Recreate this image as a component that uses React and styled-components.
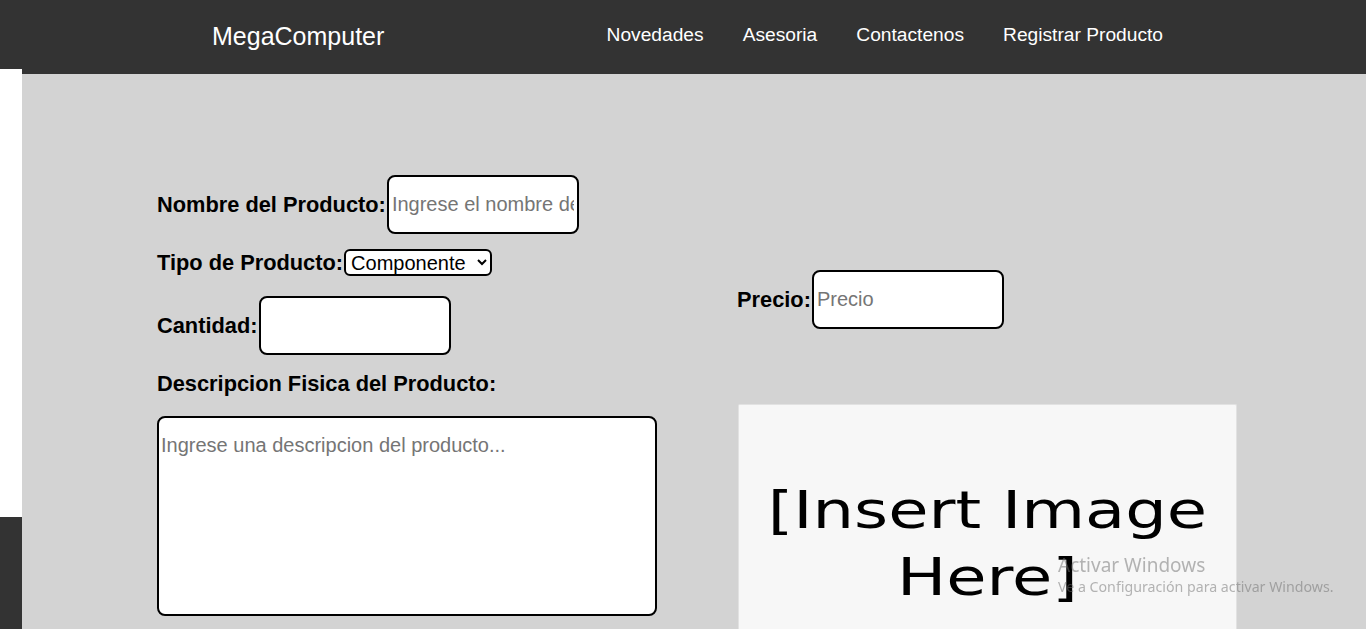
import React from 'react'
import styled, { createGlobalStyle } from 'styled-components'

const GlobalStyle = createGlobalStyle`
  html, body {
    margin: 0;
    padding: 0;
    background: #333333;
    font-family: "Liberation Sans", Arial, sans-serif;
  }
  * {
    box-sizing: border-box;
  }
`

const Page = styled.div`
  display: grid;
  grid-template-columns: 22px 1fr;
  min-height: 100vh;
  background: #333333;
`

const Side = styled.aside`
  padding-top: 69px;
`

const SideStrip = styled.div`
  height: 448px;
  background: #ffffff;
`

const Content = styled.div`
  display: flex;
  flex-direction: column;
  min-height: 100vh;
`

const Header = styled.header`
  height: 74px;
  background: #333333;
  display: flex;
  align-items: center;
  justify-content: space-between;
  padding: 0 203px 2px 190px;
  color: #ffffff;
`

const Logo = styled.div`
  font-size: 25px;
`

const Nav = styled.nav`
  display: flex;
  gap: 39px;
  margin-bottom: 3px;
`

const NavLink = styled.a`
  color: #ffffff;
  text-decoration: none;
  font-size: 19.2px;
  cursor: pointer;
`

const Main = styled.main`
  flex: 1;
  background: #d3d3d3;
  overflow: hidden;
`

const Form = styled.form`
  display: grid;
  grid-template-columns: 580px 499px;
  padding: 101px 0 0 135px;
`

const Column = styled.div`
  display: flex;
  flex-direction: column;
  align-items: flex-start;
  padding-top: ${(p) => p.$top || 0}px;
`

const Row = styled.div`
  display: flex;
  align-items: center;
  margin-bottom: ${(p) => p.$mb || 0}px;
`

const Label = styled.label`
  font-size: 21.8px;
  line-height: 25px;
  font-weight: bold;
  color: #000000;
  margin-bottom: ${(p) => p.$mb || 0}px;
`

const TextInput = styled.input`
  width: 192px;
  height: 59px;
  margin-left: 1px;
  padding: 1px 3px;
  border: 2px solid #000000;
  border-radius: 8px;
  background: #ffffff;
  font-family: "Liberation Sans", Arial, sans-serif;
  font-size: 20px;
  outline: none;

  &::placeholder {
    color: #757575;
  }
`

const Select = styled.select`
  width: 148px;
  height: 27px;
  margin-left: 1px;
  padding: 0 1px;
  border: 2px solid #000000;
  border-radius: 6px;
  background: #ffffff;
  color: #000000;
  font-family: "Liberation Sans", Arial, sans-serif;
  font-size: 20px;
`

const TextArea = styled.textarea`
  width: 500px;
  height: 200px;
  padding: 16px 2px 14px;
  border: 2px solid #000000;
  border-radius: 8px;
  background: #ffffff;
  font-family: "Liberation Sans", Arial, sans-serif;
  font-size: 20px;
  resize: none;
  outline: none;

  &::placeholder {
    color: #757575;
  }
`

const ImageBox = styled.div`
  width: 499px;
  height: 225px;
  margin-top: 75px;
  margin-left: 1px;
  padding-top: 72px;
  background: #f7f7f7;
  border: 1px solid #e2e2e2;
  border-bottom: none;
  border-radius: 2px 2px 0 0;
  text-align: center;
  overflow: hidden;
`

const ImageText = styled.div`
  display: inline-block;
  font-family: "DejaVu Sans", sans-serif;
  font-size: 52px;
  line-height: 67px;
  color: #000000;
  transform: scaleX(1.26);
  transform-origin: center top;
`

const Watermark = styled.div`
  position: fixed;
  left: 1058px;
  bottom: 32px;
  color: rgba(110, 110, 110, 0.5);
  font-family: "Noto Sans", "Open Sans", sans-serif;
  pointer-events: none;
`

const WatermarkTitle = styled.div`
  font-size: 19px;
  line-height: 24px;
`

const WatermarkSub = styled.div`
  font-size: 14.2px;
  line-height: 20px;
  white-space: nowrap;
`

export default function App() {
  return (
    <>
      <GlobalStyle />
      <Page>
        <Side>
          <SideStrip />
        </Side>
        <Content>
          <Header>
            <Logo>MegaComputer</Logo>
            <Nav>
              <NavLink>Novedades</NavLink>
              <NavLink>Asesoria</NavLink>
              <NavLink>Contactenos</NavLink>
              <NavLink>Registrar Producto</NavLink>
            </Nav>
          </Header>
          <Main>
            <Form onSubmit={(e) => e.preventDefault()}>
              <Column>
                <Row $mb={15}>
                  <Label htmlFor="nombre">Nombre del Producto:</Label>
                  <TextInput
                    id="nombre"
                    type="text"
                    placeholder="Ingrese el nombre del producto"
                  />
                </Row>
                <Row $mb={20}>
                  <Label htmlFor="tipo">Tipo de Producto:</Label>
                  <Select id="tipo" defaultValue="componente">
                    <option value="componente">Componente</option>
                    <option value="periferico">Periferico</option>
                    <option value="equipo">Equipo</option>
                  </Select>
                </Row>
                <Row $mb={16}>
                  <Label htmlFor="cantidad">Cantidad:</Label>
                  <TextInput id="cantidad" type="number" />
                </Row>
                <Label htmlFor="descripcion" $mb={20}>
                  Descripcion Fisica del Producto:
                </Label>
                <TextArea
                  id="descripcion"
                  placeholder="Ingrese una descripcion del producto..."
                />
              </Column>
              <Column $top={95}>
                <Row>
                  <Label htmlFor="precio">Precio:</Label>
                  <TextInput id="precio" type="text" placeholder="Precio" />
                </Row>
                <ImageBox>
                  <ImageText>
                    [Insert Image
                    <br />
                    Here]
                  </ImageText>
                </ImageBox>
              </Column>
            </Form>
          </Main>
        </Content>
      </Page>
      <Watermark>
        <WatermarkTitle>Activar Windows</WatermarkTitle>
        <WatermarkSub>Ve a Configuración para activar Windows.</WatermarkSub>
      </Watermark>
    </>
  )
}
